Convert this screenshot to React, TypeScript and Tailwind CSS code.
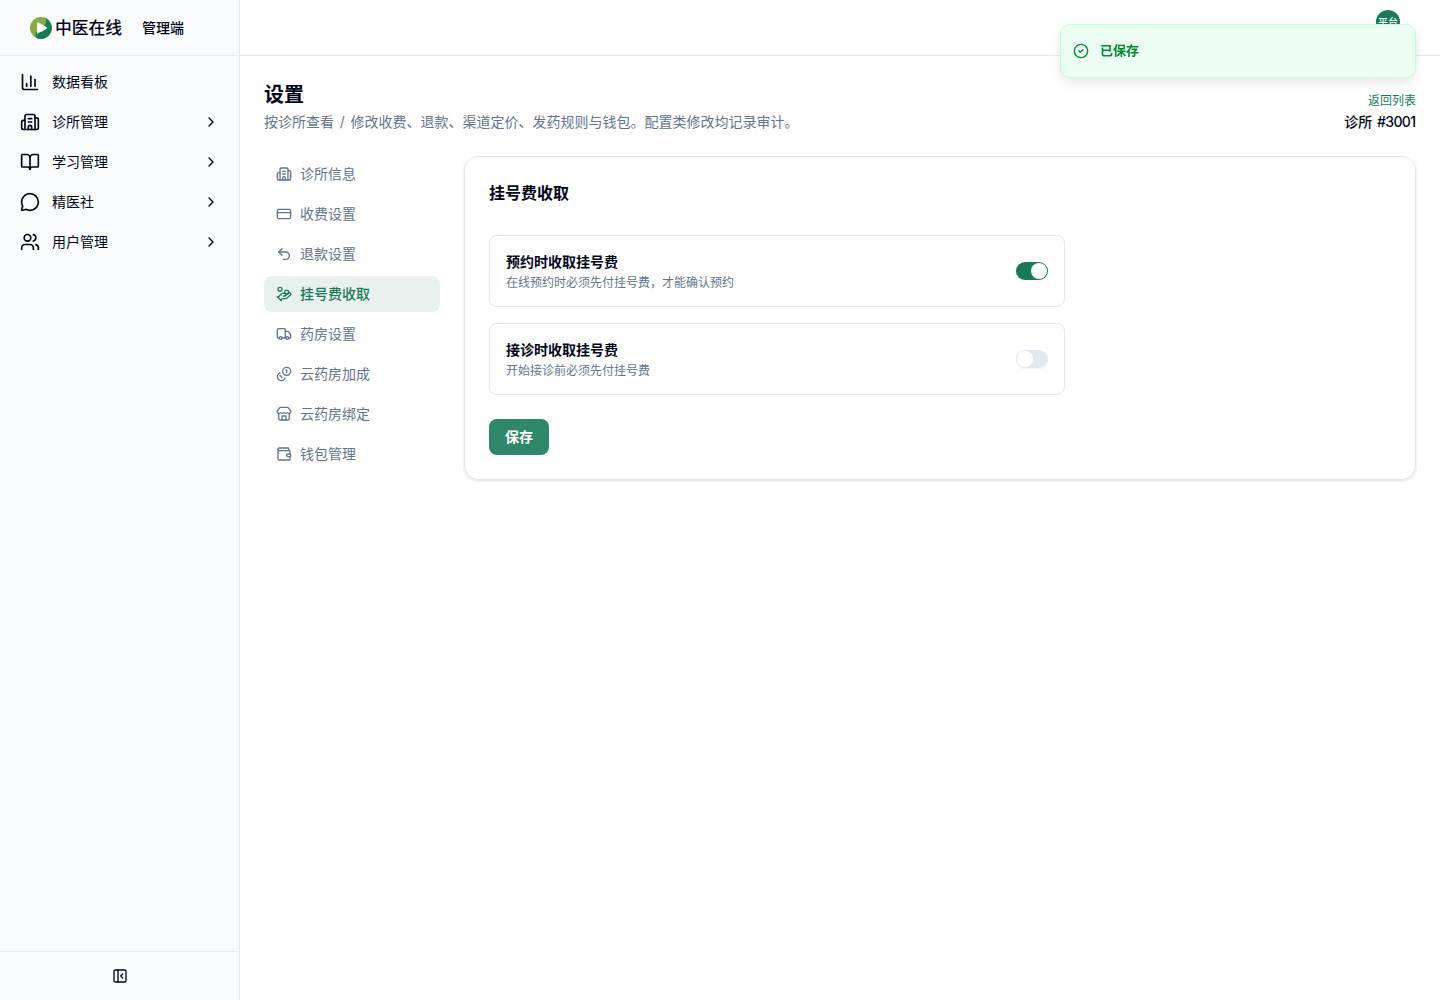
import {
  BookOpen, Building2, ChartColumn, ChevronRight, CircleCheck, CreditCard,
  HandCoins, MessageCircle, PanelLeftClose, Store, Truck, Undo2, Users, Wallet,
} from 'lucide-react';

function Coins({ className }: { className?: string }) {
  return (
    <svg
      viewBox="0 0 24 24"
      fill="none"
      stroke="currentColor"
      strokeWidth="2"
      strokeLinecap="round"
      strokeLinejoin="round"
      className={className}
      aria-hidden="true"
    >
      <path d="M13.744 17.736a6 6 0 1 1-7.48-7.48" />
      <path d="M15 6h1v4" />
      <path d="m6.134 14.768.866-.5 2 3.464" />
      <circle cx="16" cy="8" r="6" />
    </svg>
  );
}

const mainNav = [
  { label: '数据看板', icon: ChartColumn, expandable: false },
  { label: '诊所管理', icon: Building2, expandable: true },
  { label: '学习管理', icon: BookOpen, expandable: true },
  { label: '精医社', icon: MessageCircle, expandable: true },
  { label: '用户管理', icon: Users, expandable: true },
];

const settingsNav = [
  { label: '诊所信息', icon: Building2, active: false },
  { label: '收费设置', icon: CreditCard, active: false },
  { label: '退款设置', icon: Undo2, active: false },
  { label: '挂号费收取', icon: HandCoins, active: true },
  { label: '药房设置', icon: Truck, active: false },
  { label: '云药房加成', icon: Coins, active: false },
  { label: '云药房绑定', icon: Store, active: false },
  { label: '钱包管理', icon: Wallet, active: false },
];

function Logo() {
  return (
    <svg viewBox="0 0 22 22" className="size-[22px]" aria-hidden="true">
      <circle cx="11" cy="11" r="11" fill="#84ad42" />
      <path d="M15.2 .8A11 11 0 0 1 7 21.2C5.8 19.5 5.5 17.5 5.8 14.5L9 16.5L14.6 8C16.4 6 16.8 3.3 15.2 .8Z" fill="#187a58" />
      <path d="M7 6.4Q7 4.8 8.6 5.5L16.2 9.7Q17.7 10.9 16.2 12.1L12 14.4Q9 14.4 7 17Z" fill="#fff" />
    </svg>
  );
}

function Switch({ on }: { on: boolean }) {
  return (
    <button
      role="switch"
      aria-checked={on}
      className={`flex h-[18px] w-8 items-center rounded-full border border-transparent shadow-xs ${on ? 'justify-end bg-[#187a58]' : 'justify-start bg-slate-200'}`}
    >
      <span className="size-4 rounded-full bg-white" />
    </button>
  );
}

function Option({ title, hint, on }: { title: string; hint: string; on: boolean }) {
  return (
    <div className="flex h-[72px] items-center justify-between rounded-lg border border-slate-200 px-4">
      <div>
        <div className="text-sm font-semibold leading-5">{title}</div>
        <div className="mt-[3px] text-xs text-slate-500">{hint}</div>
      </div>
      <Switch on={on} />
    </div>
  );
}

export default function App() {
  return (
    <div className="flex h-screen bg-white font-[Inter,'Noto_Sans_CJK_SC',sans-serif] text-slate-950 antialiased">
      <aside className="flex w-60 shrink-0 flex-col border-r border-slate-200 bg-slate-50">
        <div className="flex h-14 items-center border-b border-slate-200 pl-[30px]">
          <Logo />
          <span className="ml-[3px] w-[68px] pt-0.5 text-[16.8px] font-medium">中医在线</span>
          <span className="ml-[19px] text-sm font-medium">管理端</span>
        </div>
        <nav className="flex flex-1 flex-col gap-1 px-2 pt-2">
          {mainNav.map(({ label, icon: Icon, expandable }) => (
            <a key={label} className="flex h-9 items-center gap-3 px-3 text-sm">
              <Icon className="size-5" />
              <span className="flex-1">{label}</span>
              {expandable && <ChevronRight className="size-4" />}
            </a>
          ))}
        </nav>
        <div className="flex h-[49px] items-center justify-center border-t border-slate-200 pl-px">
          <PanelLeftClose className="size-4" />
        </div>
      </aside>

      <div className="flex min-w-0 flex-1 flex-col">
        <header className="flex h-14 shrink-0 justify-end border-b border-slate-200 pr-10 pt-2.5">
          <div className="flex size-6 items-center justify-center rounded-full bg-[#187a58] text-[10px] font-medium text-white">平台</div>
        </header>
        <main className="p-6">
          <div className="flex justify-between">
            <div>
              <h1 className="pt-px text-xl font-semibold leading-7">设置</h1>
              <p className="-mt-px text-sm leading-7 text-slate-500 [word-spacing:1.8px]">按诊所查看 / 修改收费、退款、渠道定价、发药规则与钱包。配置类修改均记录审计。</p>
            </div>
            <div className="pt-[13px] text-right">
              <a className="block text-xs leading-4 text-[#187a58]">返回列表</a>
              <div className="mt-[3px] text-sm font-medium [word-spacing:1px]">诊所 <span className="mr-[0.5px] tracking-[-0.6px]">#3001</span></div>
            </div>
          </div>
          <div className="mt-5 flex items-start gap-6">
            <nav className="flex w-44 shrink-0 flex-col gap-1">
              {settingsNav.map(({ label, icon: Icon, active }) => (
                <a
                  key={label}
                  className={`flex h-9 items-center gap-2 rounded-lg px-3 text-sm ${active ? 'bg-[#e8f1ee] font-medium text-[#187a58]' : 'text-slate-500'}`}
                >
                  <Icon className="size-4" />
                  {label}
                </a>
              ))}
            </nav>
            <section className="h-[324px] flex-1 rounded-[14px] border border-slate-200 p-6 shadow-sm">
              <h2 className="text-base font-semibold">挂号费收取</h2>
              <div className="mt-[30px] flex w-[576px] flex-col gap-4">
                <Option title="预约时收取挂号费" hint="在线预约时必须先付挂号费，才能确认预约" on />
                <Option title="接诊时收取挂号费" hint="开始接诊前必须先付挂号费" on={false} />
              </div>
              <button className="mt-6 flex h-9 w-[60px] items-center justify-center rounded-lg bg-[#2f8769] text-sm font-semibold text-white">保存</button>
            </section>
          </div>
        </main>
      </div>

      <div
        role="status"
        className="fixed right-6 top-6 flex h-[54px] w-[356px] items-center gap-[11px] rounded-[10px] border border-[#bffcd9] bg-[#ecfdf3] px-3 text-[13px] font-semibold text-[#008a2e] shadow-[0_4px_12px_rgba(0,0,0,0.1)]"
      >
        <CircleCheck className="size-4" />
        已保存
      </div>
    </div>
  );
}
